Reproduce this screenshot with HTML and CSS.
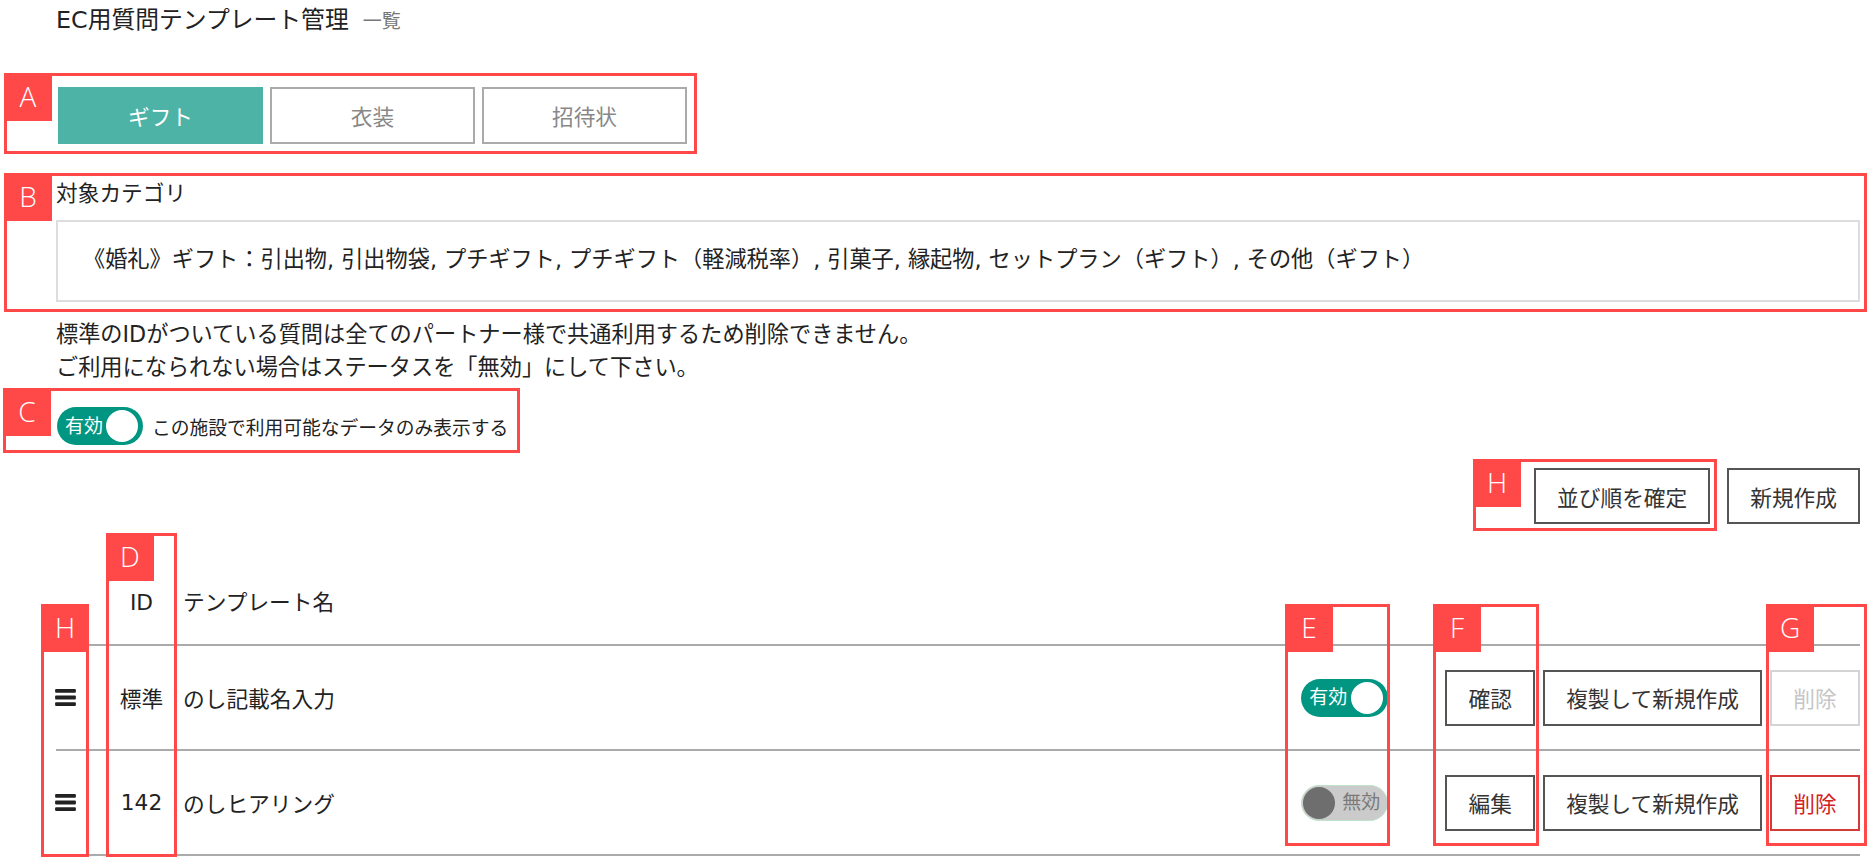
FILE: index.html
```html
<!DOCTYPE html>
<html lang="ja">
<head>
  <meta charset="UTF-8">
  <title>EC用質問テンプレート管理</title>
  <link rel="stylesheet" href="styles.css">
</head>
<body>
  <div class="page">
    <h1 class="title">EC用質問テンプレート管理<span class="title-sub">一覧</span></h1>

    <div class="tabs">
      <button class="tab active">ギフト</button>
      <button class="tab">衣装</button>
      <button class="tab">招待状</button>
    </div>

    <div class="category">
      <div class="category-label">対象カテゴリ</div>
      <div class="category-box">《婚礼》ギフト：引出物, 引出物袋, プチギフト, プチギフト（軽減税率）, 引菓子, 縁起物, セットプラン（ギフト）, その他（ギフト）</div>
    </div>

    <p class="notice">
      標準のIDがついている質問は全てのパートナー様で共通利用するため削除できません。<br>
      ご利用になられない場合はステータスを「無効」にして下さい。
    </p>

    <div class="filter">
      <span class="switch on"><span class="switch-text">有効</span><span class="switch-knob"></span></span>
      <span class="filter-label">この施設で利用可能なデータのみ表示する</span>
    </div>

    <div class="toolbar">
      <button class="btn">並び順を確定</button>
      <button class="btn">新規作成</button>
    </div>

    <div class="table">
      <div class="row head">
        <div class="col-handle"></div>
        <div class="col-id">ID</div>
        <div class="col-name">テンプレート名</div>
      </div>
      <div class="row">
        <div class="col-handle">
          <svg class="handle" viewBox="0 0 22 18"><rect y="0" width="22" height="4" rx="1"/><rect y="7" width="22" height="4" rx="1"/><rect y="14" width="22" height="4" rx="1"/></svg>
        </div>
        <div class="col-id">標準</div>
        <div class="col-name">のし記載名入力</div>
        <div class="col-status">
          <span class="switch on"><span class="switch-text">有効</span><span class="switch-knob"></span></span>
        </div>
        <div class="col-actions">
          <button class="btn">確認</button>
          <button class="btn">複製して新規作成</button>
          <button class="btn disabled">削除</button>
        </div>
      </div>
      <div class="row">
        <div class="col-handle">
          <svg class="handle" viewBox="0 0 22 18"><rect y="0" width="22" height="4" rx="1"/><rect y="7" width="22" height="4" rx="1"/><rect y="14" width="22" height="4" rx="1"/></svg>
        </div>
        <div class="col-id">142</div>
        <div class="col-name">のしヒアリング</div>
        <div class="col-status">
          <span class="switch off"><span class="switch-knob"></span><span class="switch-text">無効</span></span>
        </div>
        <div class="col-actions">
          <button class="btn">編集</button>
          <button class="btn">複製して新規作成</button>
          <button class="btn danger">削除</button>
        </div>
      </div>
    </div>
  </div>

  <!-- annotation overlay -->
  <div class="mark mark-a"><span class="mark-label">A</span></div>
  <div class="mark mark-b"><span class="mark-label">B</span></div>
  <div class="mark mark-c"><span class="mark-label">C</span></div>
  <div class="mark mark-h1"><span class="mark-label">H</span></div>
  <div class="mark mark-d"><span class="mark-label">D</span></div>
  <div class="mark mark-h2"><span class="mark-label">H</span></div>
  <div class="mark mark-e"><span class="mark-label">E</span></div>
  <div class="mark mark-f"><span class="mark-label">F</span></div>
  <div class="mark mark-g"><span class="mark-label">G</span></div>
</body>
</html>
```

FILE: styles.css
```css
html, body {
  margin: 0;
  padding: 0;
  background: #fff;
  overflow: hidden;
}

body {
  position: relative;
  width: 1875px;
  height: 867px;
  font-family: "DejaVu Sans", "Noto Sans CJK JP", sans-serif;
  font-size: 21.7px;
  color: #222;
}

.page {
  padding: 0 15px 0 56px;
}

button {
  font-family: inherit;
  font-size: 21.7px;
  background: #fff;
  cursor: pointer;
  margin: 0;
}

.title {
  margin: 0;
  font-size: 23.8px;
  font-weight: normal;
  line-height: 40px;
  color: #222;
}

.title-sub {
  margin-left: 14px;
  font-size: 19px;
  color: #777;
}

.tabs {
  display: flex;
  gap: 7px;
  margin: 46px 0 0 2px;
}

.tab {
  width: 205px;
  height: 57px;
  border: 2px solid #aaa;
  color: #888;
}

.tab.active {
  background: #4db3a6;
  border-color: #4db3a6;
  color: #fff;
}

.category {
  margin-top: 35px;
}

.category-label {
  line-height: 30px;
}

.category-box {
  box-sizing: border-box;
  height: 82px;
  margin-top: 11px;
  padding-left: 25px;
  border: 2px solid #ddd;
  font-size: 22.2px;
  line-height: 74px;
  color: #222;
  white-space: nowrap;
}

.notice {
  margin: 16px 0 0;
  font-size: 22.2px;
  line-height: 33px;
}

.filter {
  display: flex;
  align-items: center;
  gap: 9px;
  margin: 23px 0 0 1px;
}

.filter .switch {
  width: 86px;
}

.filter-label {
  font-size: 18.75px;
}

.switch {
  box-sizing: border-box;
  display: inline-flex;
  align-items: center;
  justify-content: space-between;
  width: 87px;
  height: 38px;
  border-radius: 19px;
}

.switch-text {
  font-size: 19px;
  line-height: 1;
}

.switch-knob {
  width: 32px;
  height: 32px;
  border-radius: 50%;
}

.switch.on {
  padding: 0 5px 0 8px;
  background: #009682;
}

.switch.on .switch-text {
  color: #fff;
}

.switch.on .switch-knob {
  background: #fff;
}

.switch.off {
  height: 36px;
  padding: 0 7px 0 1px;
  background: #cbcbcb;
  border: 1.5px solid #bfe3c6;
}

.switch.off .switch-text {
  color: #7a7a7a;
}

.switch.off .switch-knob {
  background: #6e6e6e;
}

.toolbar {
  display: flex;
  justify-content: flex-end;
  gap: 17px;
  margin-top: 23px;
}

.btn {
  box-sizing: border-box;
  height: 56px;
  padding: 0 21px;
  border: 2px solid #555;
  color: #333;
  white-space: nowrap;
}

.btn.disabled {
  border-color: #d4d4d4;
  color: #c6c6c6;
  cursor: default;
}

.btn.danger {
  border-color: #d33a3a;
  color: #d42222;
}

.table {
  margin-top: 57px;
}

.row {
  display: flex;
  align-items: center;
  height: 105px;
  box-sizing: border-box;
  border-bottom: 2px solid #aaa;
}

.row.head {
  align-items: flex-start;
  height: 65px;
  line-height: 44px;
}

.col-handle {
  width: 50px;
  flex: none;
}

.handle {
  display: block;
  width: 21px;
  height: 17px;
  margin-left: -1px;
  fill: #222;
}

.col-id {
  width: 71px;
  flex: none;
  text-align: center;
}

.col-name {
  flex: 1;
  padding-left: 6px;
}

.col-status {
  flex: none;
  display: flex;
}

.col-actions {
  display: flex;
  gap: 8px;
  margin-left: 57px;
}

.col-actions .btn:first-child,
.col-actions .btn:last-child {
  width: 90px;
  padding: 0;
}

/* annotation overlay */
.mark {
  position: absolute;
  box-sizing: border-box;
  border: 3px solid #ff4848;
  pointer-events: none;
}

.mark-label {
  position: absolute;
  top: -3px;
  left: -3px;
  width: 48px;
  height: 48px;
  background: #ff4848;
  color: #fff;
  font-family: "Open Sans", "Noto Sans", sans-serif;
  font-weight: 300;
  font-size: 28px;
  line-height: 46px;
  text-align: center;
}

.mark-a { left: 4px; top: 73px; width: 693px; height: 81px; }
.mark-b { left: 4px; top: 173px; width: 1863px; height: 139px; }
.mark-c { left: 3px; top: 388px; width: 517px; height: 65px; }
.mark-h1 { left: 1473px; top: 459px; width: 244px; height: 72px; }
.mark-d { left: 106px; top: 533px; width: 71px; height: 324px; }
.mark-h2 { left: 41px; top: 604px; width: 48px; height: 253px; }
.mark-e { left: 1285px; top: 604px; width: 105px; height: 242px; }
.mark-f { left: 1433px; top: 604px; width: 106px; height: 242px; }
.mark-g { left: 1766px; top: 604px; width: 101px; height: 242px; }
```
